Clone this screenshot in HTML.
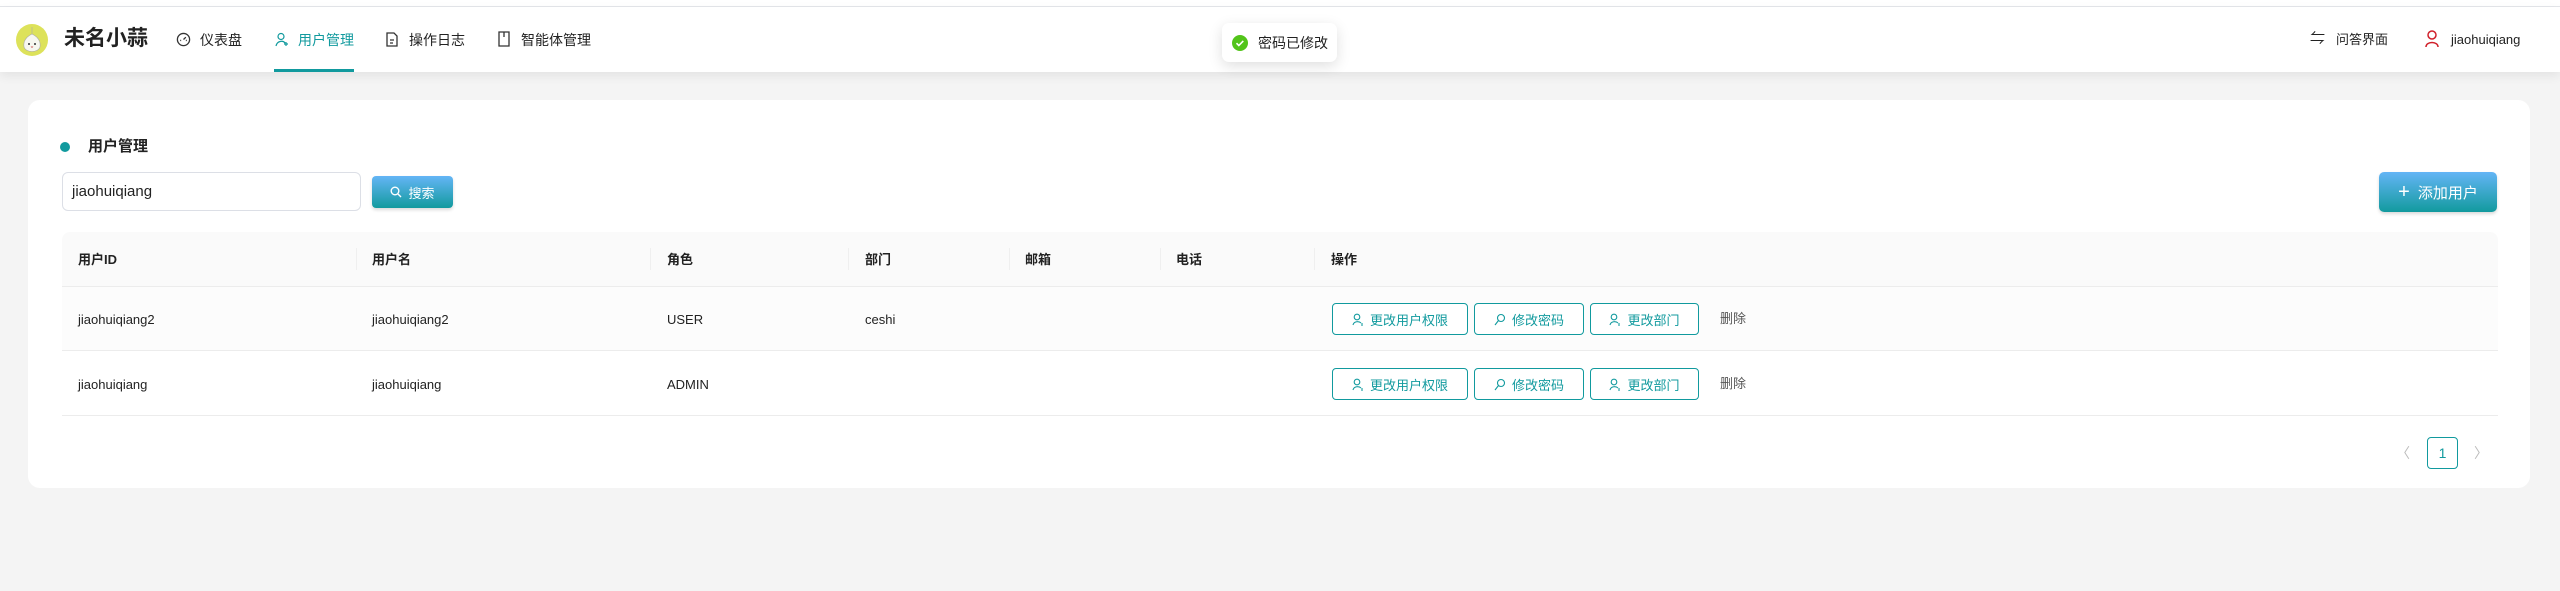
<!DOCTYPE html>
<html><head><meta charset="utf-8"><style>
*{box-sizing:border-box;margin:0;padding:0}
body{width:2560px;height:591px;background:#f4f4f4;font-family:"Liberation Sans","Noto Sans CJK SC",sans-serif;color:#222;position:relative;overflow:hidden}
.abs{position:absolute}
.top{left:0;top:0;width:2560px;height:7px;background:#fff;border-bottom:1px solid #e4e6ea}
.hdr{left:0;top:7px;width:2560px;height:65px;background:#fff;box-shadow:0 4px 10px rgba(0,0,0,.07)}
.nav{font-size:14px;color:#222;top:31px;line-height:18px;white-space:nowrap}
.card{left:28px;top:100px;width:2502px;height:388px;background:#fff;border-radius:12px}
.th{font-size:13px;font-weight:bold;top:252px;line-height:16px}
.td{font-size:13px;top:312px;line-height:16px}
.btn{height:32px;border:1px solid #119a9e;border-radius:4px;color:#119a9e;font-size:13px;display:flex;align-items:center;justify-content:center;gap:6px;background:#fff}
</style></head><body>
<div class="abs top"></div>
<div class="abs hdr"></div>
<!-- logo -->
<svg class="abs" style="left:16px;top:24px" width="32" height="32" viewBox="0 0 32 32"><circle cx="16" cy="16" r="16" fill="#dde25a"/><path d="M16 3 L16 10 C10 13 7 17 8 23 C10 29 22 29 24 23 C25 17 22 13 16 10Z" fill="#f7f7f0" stroke="#aaa" stroke-width=".6"/><circle cx="13" cy="20" r="1" fill="#333"/><circle cx="19" cy="20" r="1" fill="#333"/><path d="M15 22.5 Q16 24 17 22.5" stroke="#c55" fill="none" stroke-width=".8"/></svg>
<div class="abs" style="left:64px;top:26px;font-size:21px;font-weight:bold;color:#222;line-height:26px">未名小蒜</div>
<svg class="abs" style="left:176px;top:32px" width="15" height="15" viewBox="0 0 16 16"><circle cx="8" cy="8" r="6.5" fill="none" stroke="#333" stroke-width="1.4"/><path d="M8 8 L10.5 5.5 M4.5 9h1M10.5 9h1" stroke="#333" stroke-width="1.4"/></svg>
<div class="abs nav" style="left:200px">仪表盘</div>
<svg class="abs" style="left:275px;top:32px" width="14" height="15" viewBox="0 0 14 15"><circle cx="6" cy="4.5" r="3" fill="none" stroke="#119a9e" stroke-width="1.2"/><path d="M1 14 C2 9 8 8 10 11 M11 10v4M9 12h4" stroke="#119a9e" fill="none" stroke-width="1.2"/></svg>
<div class="abs nav" style="left:298px;color:#119a9e">用户管理</div>
<div class="abs" style="left:274px;top:69px;width:80px;height:3px;background:#119a9e"></div>
<svg class="abs" style="left:386px;top:32px" width="12" height="15" viewBox="0 0 12 15"><path d="M1 1h7l3 3v10H1z M4 8h4M4 11h3" fill="none" stroke="#333" stroke-width="1.3"/></svg>
<div class="abs nav" style="left:409px">操作日志</div>
<svg class="abs" style="left:498px;top:31px" width="12" height="16" viewBox="0 0 12 16"><path d="M1 1h10v14H1z M6 1v5" fill="none" stroke="#333" stroke-width="1.3"/></svg>
<div class="abs nav" style="left:521px">智能体管理</div>
<!-- toast -->
<div class="abs" style="left:1222px;top:23px;width:115px;height:39px;background:#fff;border-radius:7px;box-shadow:0 4px 14px rgba(0,0,0,.13)"></div>
<svg class="abs" style="left:1232px;top:35px" width="16" height="16" viewBox="0 0 16 16"><circle cx="8" cy="8" r="8" fill="#52c41a"/><path d="M4.5 8.2l2.3 2.3 4.5-4.6" stroke="#fff" stroke-width="1.6" fill="none"/></svg>
<div class="abs" style="left:1258px;top:35px;font-size:14px;line-height:16px">密码已修改</div>
<!-- right -->
<div class="abs" style="left:2310px;top:30px;font-size:15px;line-height:18px">⇋</div>
<div class="abs nav" style="left:2336px;font-size:13px">问答界面</div>
<svg class="abs" style="left:2425px;top:30px" width="14" height="18" viewBox="0 0 14 18"><circle cx="7" cy="5" r="4" fill="none" stroke="#d0202a" stroke-width="1.5"/><path d="M1 17 C1 11 13 11 13 17" fill="none" stroke="#d0202a" stroke-width="1.5"/></svg>
<div class="abs nav" style="left:2451px;font-size:13px">jiaohuiqiang</div>
<!-- card -->
<div class="abs card"></div>
<div class="abs" style="left:60px;top:142px;width:10px;height:10px;border-radius:50%;background:#119a9e"></div>
<div class="abs" style="left:88px;top:137px;font-size:15px;font-weight:bold;line-height:20px">用户管理</div>
<div class="abs" style="left:62px;top:172px;width:299px;height:39px;border:1px solid #dcdfe6;border-radius:6px;font-size:15px;line-height:37px;padding-left:9px">jiaohuiqiang</div>
<div class="abs" style="left:372px;top:176px;width:81px;height:32px;border-radius:4px;background:linear-gradient(#64b5f6,#129a9e);color:#fff;font-size:13px;display:flex;align-items:center;justify-content:center;gap:6px;box-shadow:0 2px 3px rgba(0,0,0,.15)"><svg width="12" height="12" viewBox="0 0 12 12"><circle cx="5" cy="5" r="3.8" fill="none" stroke="#fff" stroke-width="1.4"/><path d="M8 8l3 3" stroke="#fff" stroke-width="1.4"/></svg>搜索</div>
<div class="abs" style="left:2379px;top:172px;width:118px;height:40px;border-radius:5px;background:linear-gradient(#64b5f6,#129a9e);color:#fff;font-size:15px;display:flex;align-items:center;justify-content:center;gap:8px;box-shadow:0 2px 3px rgba(0,0,0,.15)"><span style="font-size:20px;font-weight:300">+</span>添加用户</div>
<!-- table -->
<div class="abs" style="left:62px;top:232px;width:2436px;height:55px;background:#fafafa;border-radius:8px 8px 0 0;border-bottom:1px solid #ececec"></div>
<div class="abs" style="left:62px;top:287px;width:2436px;height:64px;background:#fcfcfc;border-bottom:1px solid #ececec"></div>
<div class="abs" style="left:62px;top:351px;width:2436px;height:65px;border-bottom:1px solid #ececec"></div>
<div class="abs" style="left:356px;top:248px;width:1px;height:22px;background:#efefef"></div>
<div class="abs" style="left:650px;top:248px;width:1px;height:22px;background:#efefef"></div>
<div class="abs" style="left:848px;top:248px;width:1px;height:22px;background:#efefef"></div>
<div class="abs" style="left:1009px;top:248px;width:1px;height:22px;background:#efefef"></div>
<div class="abs" style="left:1160px;top:248px;width:1px;height:22px;background:#efefef"></div>
<div class="abs" style="left:1314px;top:248px;width:1px;height:22px;background:#efefef"></div>
<div class="abs th" style="left:78px">用户ID</div>
<div class="abs th" style="left:372px">用户名</div>
<div class="abs th" style="left:667px">角色</div>
<div class="abs th" style="left:865px">部门</div>
<div class="abs th" style="left:1025px">邮箱</div>
<div class="abs th" style="left:1176px">电话</div>
<div class="abs th" style="left:1331px">操作</div>
<div class="abs td" style="left:78px">jiaohuiqiang2</div>
<div class="abs td" style="left:372px">jiaohuiqiang2</div>
<div class="abs td" style="left:667px">USER</div>
<div class="abs td" style="left:865px">ceshi</div>
<div class="abs td" style="left:78px;top:377px">jiaohuiqiang</div>
<div class="abs td" style="left:372px;top:377px">jiaohuiqiang</div>
<div class="abs td" style="left:667px;top:377px">ADMIN</div>
<!-- buttons row1 -->
<div class="abs btn" style="left:1332px;top:303px;width:136px"><svg width="12" height="13" viewBox="0 0 12 13"><circle cx="5" cy="4" r="2.8" fill="none" stroke="#119a9e" stroke-width="1.1"/><path d="M1 12c1-4 6-4 8-2M10 10v3" stroke="#119a9e" fill="none" stroke-width="1.1"/></svg>更改用户权限</div>
<div class="abs btn" style="left:1474px;top:303px;width:110px"><svg width="12" height="13" viewBox="0 0 12 13"><circle cx="7" cy="5" r="3.5" fill="none" stroke="#119a9e" stroke-width="1.1"/><path d="M4.5 7.5L1 12" stroke="#119a9e" stroke-width="1.1"/></svg>修改密码</div>
<div class="abs btn" style="left:1590px;top:303px;width:109px"><svg width="12" height="13" viewBox="0 0 12 13"><circle cx="5" cy="4" r="2.8" fill="none" stroke="#119a9e" stroke-width="1.1"/><path d="M1 12c1-4 6-4 8-2M10 10v3" stroke="#119a9e" fill="none" stroke-width="1.1"/></svg>更改部门</div>
<div class="abs td" style="left:1720px;top:311px;color:#555">删除</div>
<!-- row2 -->
<div class="abs btn" style="left:1332px;top:368px;width:136px"><svg width="12" height="13" viewBox="0 0 12 13"><circle cx="5" cy="4" r="2.8" fill="none" stroke="#119a9e" stroke-width="1.1"/><path d="M1 12c1-4 6-4 8-2M10 10v3" stroke="#119a9e" fill="none" stroke-width="1.1"/></svg>更改用户权限</div>
<div class="abs btn" style="left:1474px;top:368px;width:110px"><svg width="12" height="13" viewBox="0 0 12 13"><circle cx="7" cy="5" r="3.5" fill="none" stroke="#119a9e" stroke-width="1.1"/><path d="M4.5 7.5L1 12" stroke="#119a9e" stroke-width="1.1"/></svg>修改密码</div>
<div class="abs btn" style="left:1590px;top:368px;width:109px"><svg width="12" height="13" viewBox="0 0 12 13"><circle cx="5" cy="4" r="2.8" fill="none" stroke="#119a9e" stroke-width="1.1"/><path d="M1 12c1-4 6-4 8-2M10 10v3" stroke="#119a9e" fill="none" stroke-width="1.1"/></svg>更改部门</div>
<div class="abs td" style="left:1720px;top:376px;color:#555">删除</div>
<!-- pagination -->
<div class="abs" style="left:2396px;top:443px;font-size:14px;color:#bbb">〈</div>
<div class="abs" style="left:2427px;top:437px;width:31px;height:32px;border:1px solid #119a9e;border-radius:4px;color:#119a9e;font-size:14px;text-align:center;line-height:30px">1</div>
<div class="abs" style="left:2474px;top:443px;font-size:14px;color:#bbb">〉</div>
</body></html>
